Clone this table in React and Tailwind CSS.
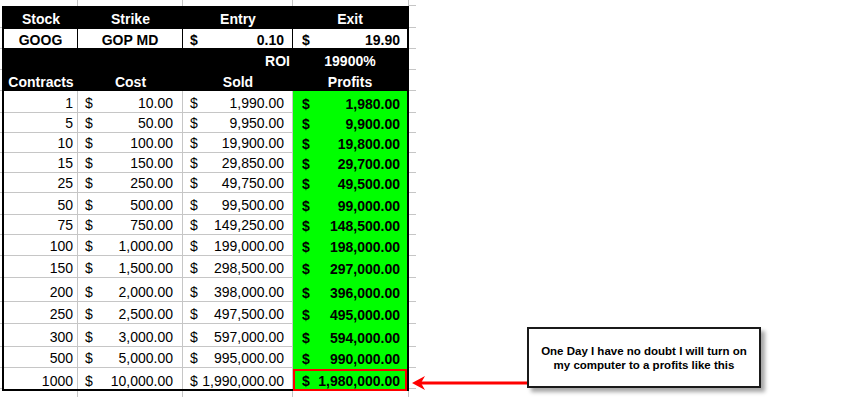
import React from "react";

const line = "border-[#c6c6c6]";

const rows = [
  { n: 1, h: "h-[22px]" },
  { n: 5, h: "h-[20px]" },
  { n: 10, h: "h-[20px]" },
  { n: 15, h: "h-[20px]" },
  { n: 25, h: "h-[20px]" },
  { n: 50, h: "h-[22px]" },
  { n: 75, h: "h-[20px]" },
  { n: 100, h: "h-[21px]" },
  { n: 150, h: "h-[22px]" },
  { n: 200, h: "h-[24px]" },
  { n: 250, h: "h-[22px]" },
  { n: 300, h: "h-[23px]" },
  { n: 500, h: "h-[21px]" },
  { n: 1000, h: "h-[21px]" },
];

const money = (v) =>
  v.toLocaleString("en-US", { minimumFractionDigits: 2, maximumFractionDigits: 2 });

function Side({ w = "w-[2px]" }) {
  return <div className={`${w} shrink-0 border-b ${line}`} />;
}

function Money({ value, className }) {
  return (
    <div className={`flex items-end justify-between ${className}`}>
      <span>$</span>
      <span>{money(value)}</span>
    </div>
  );
}

function Strip() {
  return (
    <div className="flex h-[6px]">
      <div className="w-[2px]" />
      <div className={`w-[76px] border-r ${line}`} />
      <div className={`w-[105px] border-r ${line}`} />
      <div className={`w-[110px] border-r ${line}`} />
      <div className={`w-[116px] border-r ${line}`} />
    </div>
  );
}

export default function App() {
  return (
    <div className="relative w-[866px] h-[397px] bg-white overflow-hidden font-['Liberation_Sans',Arial,sans-serif] text-[14px] leading-[16px] text-black">
      <div className="flex h-[6px]">
        <div className="w-[2px]" />
        <div className={`w-[76px] border-r ${line}`} />
        <div className={`w-[105px] border-r ${line}`} />
        <div className={`w-[110px] border-r ${line}`} />
        <div className={`w-[116px] border-r ${line}`} />
        <div className={`w-[7px] border-b ${line}`} />
      </div>

      {/* header */}
      <div className="flex h-[22px]">
        <Side />
        <div className="flex w-[407px] bg-black border-x-2 border-black text-white font-bold">
          <div className="w-[74px] flex items-end justify-center pb-[1px]">Stock</div>
          <div className="w-[105px] flex items-end justify-center pb-[1px]">Strike</div>
          <div className="w-[110px] flex items-end justify-center pb-[1px]">Entry</div>
          <div className="w-[114px] flex items-end justify-center pb-[1px]">Exit</div>
        </div>
        <Side w="w-[7px]" />
      </div>

      <div className="flex h-[21px]">
        <Side />
        <div className="flex w-[407px] bg-black border-x-2 border-black py-[1px] font-bold">
          <div className="w-[74px] bg-white border-r border-black flex items-end justify-center">GOOG</div>
          <div className="w-[105px] bg-white border-r border-black flex items-end justify-center">GOP MD</div>
          <div className="w-[110px] bg-white border-r border-black flex items-end justify-between pl-[7px] pr-[8px]">
            <span>$</span>
            <span>0.10</span>
          </div>
          <div className="w-[114px] bg-white flex items-end justify-between pl-[9px] pr-[7px]">
            <span>$</span>
            <span>19.90</span>
          </div>
        </div>
        <Side w="w-[7px]" />
      </div>

      <div className="flex h-[21px]">
        <Side />
        <div className="flex w-[407px] bg-black border-x-2 border-black text-white font-bold">
          <div className="w-[74px]" />
          <div className="w-[105px]" />
          <div className="w-[110px] flex items-end justify-end pr-[3px] pb-[1px]">ROI</div>
          <div className="w-[114px] flex items-end justify-center pb-[1px]">19900%</div>
        </div>
        <Side w="w-[7px]" />
      </div>

      <div className="flex h-[21px]">
        <Side />
        <div className="flex w-[407px] bg-black border-x-2 border-black text-white font-bold">
          <div className="w-[74px] flex items-end justify-center pb-[1px]">Contracts</div>
          <div className="w-[105px] flex items-end justify-center pb-[1px]">Cost</div>
          <div className="w-[110px] flex items-end justify-center pb-[1px]">Sold</div>
          <div className="w-[114px] flex items-end justify-center pb-[1px]">Profits</div>
        </div>
        <Side w="w-[7px]" />
      </div>

      {/* data */}
      {rows.map((r, i) => {
        const last = i === rows.length - 1;
        const cell = last ? "pb-0" : `border-b ${line} pb-[1px]`;
        return (
          <div key={r.n} className={`flex ${r.h}`}>
            <Side />
            <div className="flex w-[407px] border-x-2 border-black">
              <div className={`w-[74px] border-r ${line} ${cell} flex items-end justify-end pr-[4px]`}>
                {r.n}
              </div>
              <Money value={r.n * 10} className={`w-[105px] border-r ${line} ${cell} pl-[7px] pr-[9px]`} />
              <Money value={r.n * 1990} className={`w-[110px] border-r ${line} ${cell} pl-[7px] pr-[8px]`} />
              <div className="relative w-[114px]">
                <Money
                  value={r.n * 1980}
                  className={`h-full bg-[#00ff00] font-bold pl-[9px] pr-[7px] ${last ? "pb-0" : "pb-[1px]"}`}
                />
                {last && (
                  <div className="pointer-events-none absolute left-0 right-0 top-[1px] -bottom-[2px] border-2 border-[#ff0000]" />
                )}
              </div>
            </div>
            <Side w="w-[7px]" />
          </div>
        );
      })}

      <div className="flex h-[2px]">
        <div className="w-[2px]" />
        <div className="w-[407px] bg-black" />
      </div>
      <Strip />

      {/* callout */}
      <svg className="absolute left-[410px] top-[374px]" width="120" height="20" viewBox="0 0 120 20">
        <line x1="11" y1="9" x2="119" y2="9" stroke="#ff0000" strokeWidth="3" />
        <path d="M2 9 L15 2 L11 9 L15 16 Z" fill="#ff0000" />
      </svg>
      <div className="absolute left-[527px] top-[327px] w-[234px] h-[61px] bg-white border-2 border-[#1a1a1a] shadow-[4px_4px_4px_rgba(0,0,0,0.35)] flex items-center justify-center text-center font-bold text-[11.5px] leading-[14px]">
        <p>
          One Day I have no doubt I will turn on
          <br />
          my computer to a profits like this
        </p>
      </div>
    </div>
  );
}
